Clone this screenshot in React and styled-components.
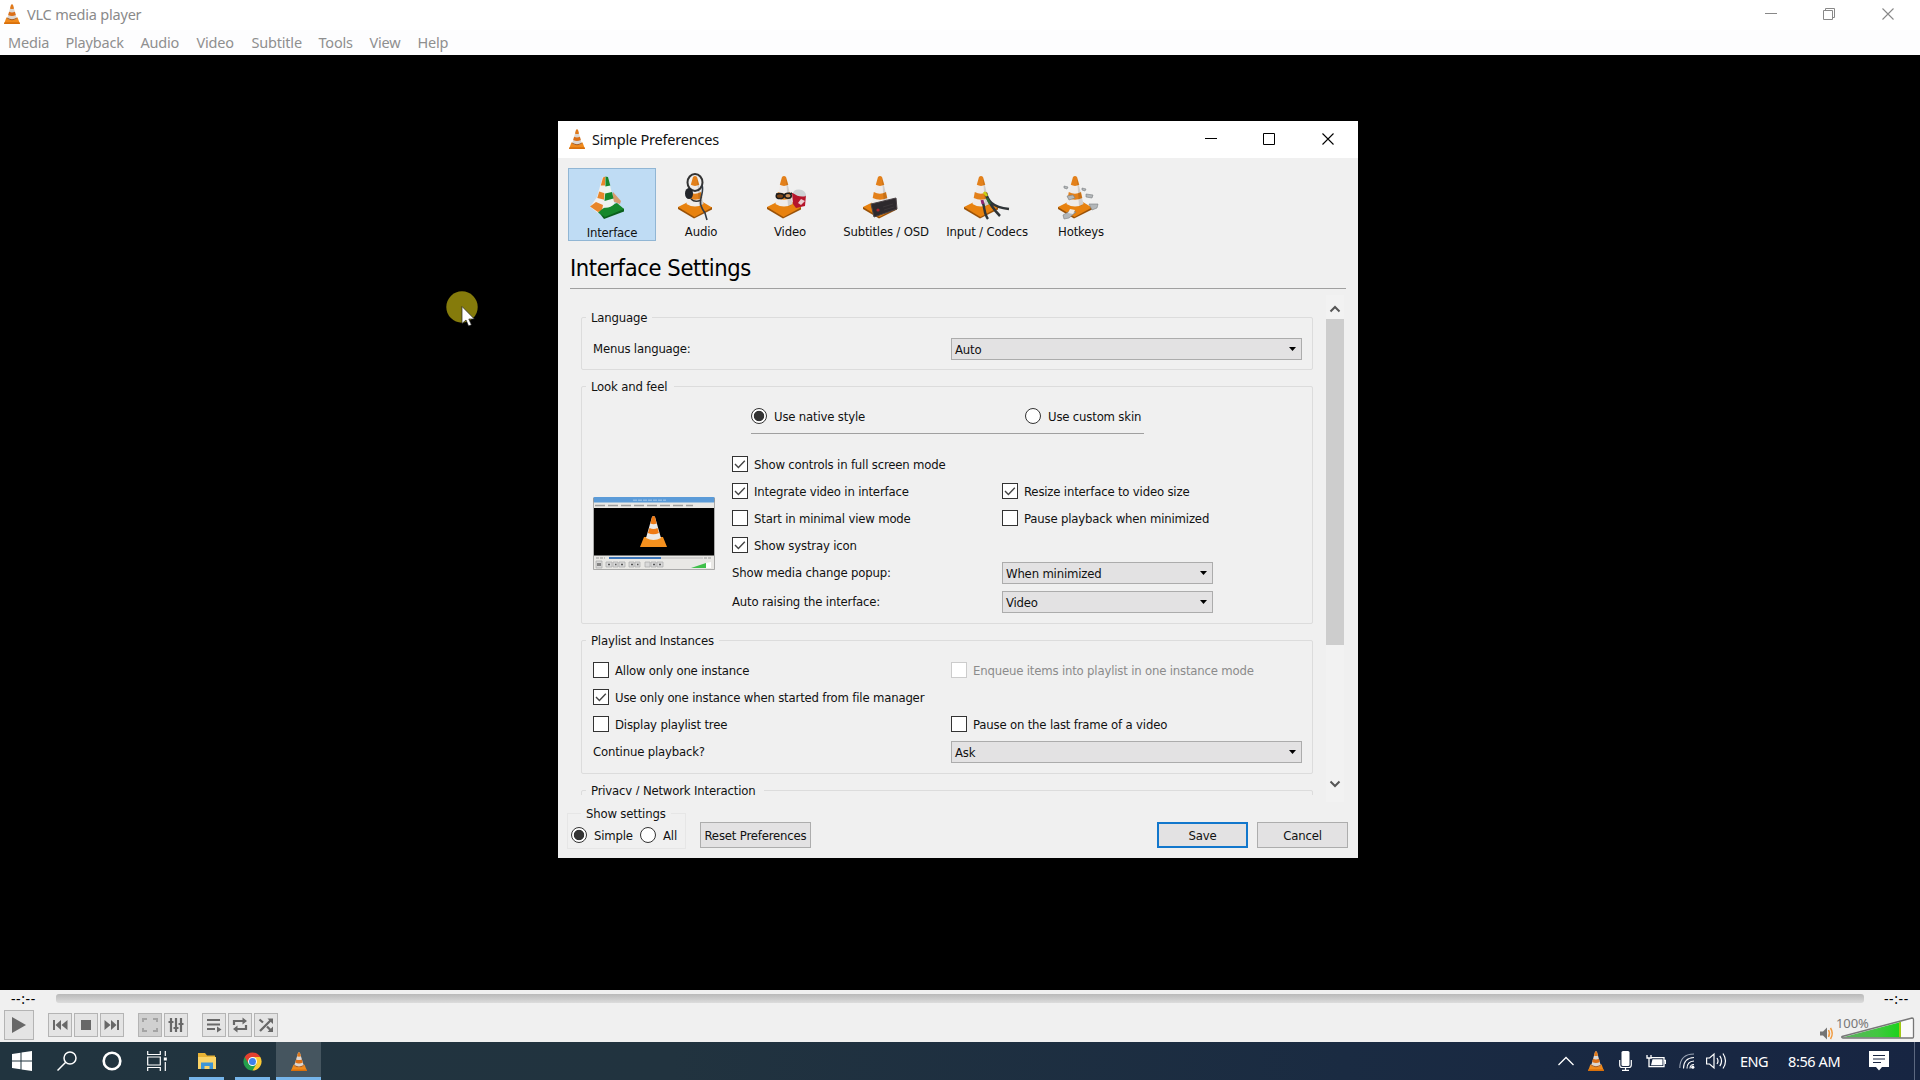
import React from "react";
import styled, { createGlobalStyle, css } from "styled-components";

const UI = `"Segoe UI", "Noto Sans", "Open Sans", sans-serif`;
const DLG = `Tahoma, "DejaVu Sans Condensed", "Noto Sans", sans-serif`;

const Global = createGlobalStyle`
  * { box-sizing: border-box; }
  body { margin: 0; background: #000; overflow: hidden; }
  svg { display: block; flex: none; }
`;

const Screen = styled.div`
  width: 1920px;
  height: 1080px;
  position: relative;
  display: flex;
  flex-direction: column;
  background: #000;
  font-family: ${UI};
  white-space: nowrap;
`;

/* ---------- main window ---------- */
const TitleBar = styled.header`
  height: 30px;
  flex: none;
  background: #fff;
  display: flex;
  align-items: center;
  padding: 0 26px 2px 4px;
`;
const WindowTitle = styled.span`
  flex: 1;
  margin-left: 7px;
  font-size: 14.5px;
  letter-spacing: -0.2px;
  line-height: 20px;
  color: ${(p) => p.$color};
`;
const WindowButtons = styled.div`
  display: flex;
  gap: 46px;
`;
const MenuBar = styled.nav`
  height: 25px;
  flex: none;
  background: #fdfdfe;
  display: flex;
  padding-left: 8px;
  gap: 16px;
`;
const MenuItem = styled.span`
  width: ${(p) => p.$w}px;
  font-size: 14.5px;
  line-height: 25px;
  letter-spacing: -0.2px;
  color: #8f8f8f;
`;
const Stage = styled.main`
  height: 935px;
  flex: none;
  padding: 66px 0 0 558px;
`;

/* ---------- dialog ---------- */
const Dialog = styled.section`
  width: 800px;
  height: 737px;
  background: #f0f0f0;
  display: flex;
  flex-direction: column;
  font-family: ${DLG};
  font-size: 13px;
  letter-spacing: -0.18px;
  color: #111;
`;
const DialogTitle = styled.div`
  height: 37px;
  flex: none;
  background: #fff;
  display: flex;
  align-items: center;
  padding: 0 24px 1px 11px;
  font-family: ${UI};
`;
const Tabs = styled.div`
  display: flex;
  gap: 1px;
  height: 73px;
  margin: 10px 0 0 10px;
  flex: none;
`;
const Tab = styled.div`
  width: ${(p) => p.$w || 88}px;
  border: 1px solid transparent;
  display: flex;
  flex-direction: column;
  align-items: center;
  padding-top: 4px;
  line-height: 21px;
  ${(p) =>
    p.$active &&
    css`
      background: #bfdcf4;
      border-color: #91b6d4;
      line-height: 23px;
    `}
`;
const Heading = styled.h1`
  margin: 9px 12px 0 12px;
  height: 39px;
  flex: none;
  font-size: 23.5px;
  font-weight: 400;
  line-height: 36px;
  letter-spacing: -0.4px;
  border-bottom: 1px solid #a0a0a0;
  color: #000;
`;
const ScrollArea = styled.div`
  display: flex;
  justify-content: space-between;
  height: 507px;
  flex: none;
  margin: 6px 14px 0 23px;
`;
const Content = styled.div`
  width: 733px;
  height: 500px;
  overflow: hidden;
  padding-top: 12px;
`;
const Group = styled.fieldset`
  margin: 0 0 ${(p) => p.$gap}px;
  border: 1px solid #dcdcdc;
  border-radius: 2px;
  padding: ${(p) => p.$pt || 0}px 0 0;
  width: 732px;
  min-width: 0;
  height: ${(p) => p.$h}px;
`;
const Legend = styled.legend`
  margin-left: 4px;
  padding: 0 ${(p) => p.$pr || 5}px 0 5px;
  height: 20px;
  line-height: 21px;
`;
const Row = styled.div`
  display: flex;
  align-items: center;
  height: ${(p) => p.$h || 27}px;
  padding-left: ${(p) => p.$pl || 0}px;
`;
const Cell = styled.div`
  width: ${(p) => p.$w}px;
  flex: none;
  display: flex;
  align-items: center;
  line-height: 21px;
`;
const Select = styled.div`
  width: ${(p) => p.$w}px;
  height: 22px;
  flex: none;
  border: 1px solid #acacac;
  background: #e3e2e3;
  display: flex;
  align-items: center;
  justify-content: space-between;
  padding: 0 5px 0 3px;
  line-height: 21px;
`;
const Box = styled.span`
  width: 16px;
  height: 16px;
  flex: none;
  margin-right: 6px;
  border: 1px solid ${(p) => (p.$off ? "#ccc" : "#333")};
  background: #fff;
`;
const CheckLabel = styled.label`
  display: flex;
  align-items: center;
  line-height: 21px;
  color: ${(p) => (p.$off ? "#8b8b8b" : "inherit")};
`;
const Caption = styled.span`
  padding-top: 1px;
`;
const Dot = styled.span`
  width: 16px;
  height: 16px;
  flex: none;
  margin-right: 7px;
  border: 1px solid #333;
  border-radius: 50%;
  background: ${(p) => (p.$on ? "radial-gradient(circle, #333 4.8px, #fff 5.6px)" : "#fff")};
`;
const LookBody = styled.div`
  display: flex;
  align-items: flex-start;
  padding: 0 0 0 11px;
`;
const Thumb = styled.div`
  width: 122px;
  height: 73px;
  margin: 47px 17px 0 0;
  flex: none;
`;
const StyleRow = styled.div`
  display: flex;
  width: 393px;
  height: 38px;
  margin: 0 0 16px 169px;
  padding-top: 3px;
  align-items: center;
  border-bottom: 1px solid #a0a0a0;
`;
const Scrollbar = styled.div`
  width: 18px;
  height: 507px;
  display: flex;
  flex-direction: column;
  align-items: center;
  background: #f2f2f2;
  padding-top: 10px;
`;
const ScrollThumb = styled.div`
  width: 18px;
  height: 326px;
  background: #cdcdcd;
  margin: 6px 0 135px;
`;
const Footer = styled.div`
  display: flex;
  flex: 1;
  padding: 1px 10px 0 9px;
`;
const ShowSettings = styled.fieldset`
  margin: 0 14px 0 0;
  padding: 0 0 0 3px;
  width: 119px;
  min-width: 0;
  height: 46px;
  border: 1px solid #e6e6e6;
`;
const FooterLegend = styled(Legend)`
  margin-left: 10px;
`;
const Button = styled.div`
  width: ${(p) => p.$w}px;
  height: 26px;
  margin: 19px 0 0 ${(p) => p.$ml || 0};
  border: ${(p) => (p.$main ? "2px solid #1277cc" : "1px solid #adadad")};
  background: #e3e2e3;
  display: flex;
  align-items: center;
  justify-content: center;
`;

/* ---------- player controls ---------- */
const Controls = styled.footer`
  height: 52px;
  flex: none;
  background: #f0f0f0;
`;
const SeekRow = styled.div`
  display: flex;
  align-items: center;
  justify-content: space-between;
  height: 18px;
  padding: 0 11px;
  font-size: 14px;
  color: #000;
`;
const Time = styled.span`
  width: 25px;
  line-height: 16px;
  letter-spacing: 0.6px;
`;
const Groove = styled.div`
  width: 1808px;
  height: 9px;
  margin-bottom: 2px;
  border-radius: 3px;
  background: linear-gradient(#b9b9b9, #dcdcdc);
`;
const ControlRow = styled.div`
  display: flex;
  align-items: center;
  height: 34px;
  padding: 0 5px 0 4px;
`;
const ControlButton = styled.div`
  width: ${(p) => p.$s || 24}px;
  height: ${(p) => p.$s || 24}px;
  margin-left: ${(p) => p.$ml || 0}px;
  border: 1px solid #b4b4b4;
  background: ${(p) => (p.$off ? "#d0d0d0" : "#e4e4e4")};
  display: flex;
  align-items: center;
  justify-content: center;
`;
const Volume = styled.div`
  margin: 5px 0 0 auto;
`;
const VolumeText = styled.span`
  position: absolute;
  left: 1836px;
  top: 1015px;
  font: 13px/16px ${UI};
  letter-spacing: -0.1px;
  color: #777;
`;

/* ---------- taskbar ---------- */
const Taskbar = styled.div`
  height: 38px;
  flex: none;
  display: flex;
  background: linear-gradient(90deg, #21343f 0%, #21333f 35%, #1a2b42 70%, #172542 100%);
  color: #fff;
`;
const TaskItem = styled.div`
  width: ${(p) => p.$w}px;
  margin-right: ${(p) => p.$mr || 0}px;
  display: flex;
  align-items: center;
  justify-content: center;
  background: ${(p) => (p.$active ? "#45555f" : "transparent")};
  border-bottom: 3px solid ${(p) => (p.$run ? "#76b5ea" : "transparent")};
  padding-top: 3px;
`;
const Tray = styled.div`
  margin-left: auto;
  display: flex;
  align-items: center;
  padding-right: 5px;
`;
const TrayItem = styled.div`
  width: ${(p) => p.$w}px;
  margin-right: ${(p) => p.$mr}px;
  font-size: 14.5px;
  letter-spacing: ${(p) => p.$track || 0}px;
  line-height: 38px;
  flex: none;
`;
const PeekLine = styled.div`
  width: 1px;
  height: 38px;
  background: #5c6880;
`;
const Pointer = styled.div`
  position: absolute;
  left: 446px;
  top: 291px;
`;

/* ---------- drawings ---------- */
function Cone({ w = 16, h = 20 }) {
  return (
    <svg width={w} height={h} viewBox="0 0 16 20" preserveAspectRatio="none">
      <path d="M2.4 13.5h11.2L16 20H0z" fill="#f08a1c" />
      <path d="M0.5 18.3h15L16 20H0z" fill="#d9700b" />
      <path d="M7 1Q8-.5 9 1L12.8 14.5Q8 17.5 3.2 14.5z" fill="#dcd6d1" />
      <path d="M7 1Q8-.5 9 1L10 4.5Q8 5.5 6 4.5z" fill="#e27a1a" />
      <path d="M5.1 7.8Q8 9.2 10.9 7.8L11.8 11Q8 13 4.2 11z" fill="#dc6f17" />
      <path d="M3.4 13.8Q8 16.5 12.6 13.8L12.8 14.8Q8 17.5 3.2 14.8z" fill="#a85a1c" />
    </svg>
  );
}

function BigCone() {
  return (
    <g>
      <path d="M1 34L1 36L17 45.5L35 36.5V34z" fill="#9a5208" />
      <path d="M1 34L12 28.5H25L35 34.5L17.5 44z" fill="#e8820f" />
      <path d="M16 4Q18 2 20 4L26.5 31Q18 36 9.5 31z" fill="#efebe9" />
      <path d="M16 4Q18 2 20 4L22.3 11.8Q18 14 13.8 11.8z" fill="#e3801a" />
      <path d="M11.800 19Q18 22.500 24 19L25.300 25Q18 28.500 10.700 25z" fill="#e3801a" />
      <path d="M20 4.2L26.5 31Q24.5 33 22 33.5z" fill="#000" opacity=".12" />
    </g>
  );
}

function TabIcon({ kind }) {
  return (
    <svg width="48" height="48" viewBox="0 0 48 48">
      {kind === "interface" && (
        <>
          <path d="M25 19l8 9-1 3-8-3z" fill="#d99a6c" />
          <path d="M2 34L10 40L17 37V5L14.6 4L9 24z" fill="#f3f0ee" />
          <path d="M15 4.500L17.500 3.500V12.500H12.800z" fill="#e8862a" />
          <path d="M11.200 18.500L17.500 20.500V27L9.300 25z" fill="#e8862a" />
          <path d="M2 33.500L8 29L15 32L14 37.500L10 39z" fill="#e8862a" />
          <path d="M11 39.500L16 46L36 38.500V36L28 31z" fill="#0a5f1c" />
          <path d="M10 39.500L17 34L29 30L36 36L17 44z" fill="#16882c" />
          <path d="M17.5 3.500L20 4L26.500 31Q22 35.500 15.500 34.500z" fill="#eef3ee" />
          <path d="M17.5 3.500L20 4L22.300 12.500L17.400 13.500z" fill="#16882c" />
          <path d="M17.200 20.500L24 19L25.500 25.500L16.500 28z" fill="#16882c" />
        </>
      )}
      {kind === "audio" && (
        <>
          <BigCone />
          <ellipse cx="18" cy="9.5" rx="7.5" ry="8.5" fill="none" stroke="#333" strokeWidth="2" />
          <path d="M25 12C27 18 24 22 23.5 28C23 33 25 36 28 40L30 47" fill="none" stroke="#333b45" strokeWidth="1.6" />
          <ellipse cx="12" cy="20.5" rx="4" ry="5.5" fill="#23262b" />
          <path d="M14 26Q18 30 24 27" fill="none" stroke="#333" strokeWidth="1.6" />
        </>
      )}
      {kind === "video" && (
        <>
          <BigCone />
          <path d="M10 21l7 1 7-1 2-1" fill="none" stroke="#222" strokeWidth="1.6" />
          <ellipse cx="14" cy="23" rx="3.8" ry="2.6" fill="#7c4212" stroke="#1c1c1c" strokeWidth="1.5" />
          <ellipse cx="22" cy="22.7" rx="3.3" ry="2.5" fill="#c98d55" stroke="#1c1c1c" strokeWidth="1.5" />
          <path d="M26 20L40 22L39 33L30 35L27 31z" fill="#b5152b" />
          <path d="M27 20Q28 16 33 16.500Q40 17 40 23Q33 25 27 20z" fill="#cdd2d4" />
          <path d="M32 30l3-4 4 2-4 4z" fill="#e9cdd0" />
        </>
      )}
      {kind === "subs" && (
        <>
          <BigCone />
          <path d="M9 31L34 25L35 36L12 44z" fill="#2d292d" stroke="#4c4447" strokeWidth="1" />
          <circle cx="16" cy="37" r="1.6" fill="#a9242c" />
          <path d="M21 34l10-3M22 37l10-3" stroke="#3b3639" strokeWidth="1" />
        </>
      )}
      {kind === "codecs" && (
        <>
          <BigCone />
          <path d="M23 20C25 27 28 34 46 36M23 22C27 32 31 37 37 43M20 30C22 36 21 41 25 46" fill="none" stroke="#2f3437" strokeWidth="2.5" />
          <path d="M21 19l3 4" stroke="#c9cf10" strokeWidth="2.600" />
          <path d="M24 25l3 6" stroke="#2d6a33" strokeWidth="2.200" />
          <path d="M19 27l1 4" stroke="#8e2570" strokeWidth="3" />
        </>
      )}
      {kind === "hotkeys" && (
        <>
          <BigCone />
          <g fill="#b3b7ba" stroke="#7a7d80" strokeWidth=".6">
            <path d="M7 13l4 1-1 2-3-1zM25 15l4 1-1 2-3-1zM29 21l7 1-1 3-6-1zM10 23l6-1 2 3-6 2zM32 31l9 0-1 4-5 2zM6 42l7-4 6 1-7 6-5 1z" />
          </g>
          <path d="M13 36l5 1-2 4-5-1z" fill="#ece9e6" />
        </>
      )}
    </svg>
  );
}

function PlayerThumb() {
  return (
    <svg width="122" height="73" viewBox="0 0 122 73">
      <rect width="122" height="73" rx="1.5" fill="#e9e8e5" />
      <rect width="122" height="5.5" rx="1.5" fill="#5b9bd8" />
      <path d="M40 3.2h33" stroke="#8dbbe5" strokeWidth="1.6" strokeDasharray="4 1" />
      <path d="M2 8.5h98" stroke="#9d9d9d" strokeWidth="1.6" strokeDasharray="10 3" />
      <rect x="1" y="11" width="120" height="47.5" fill="#000" />
      <path d="M51 40h19l4 10H47z" fill="#f4901e" />
      <path d="M59 20q1.500-2 3 0l6 21q-7.500 4-15 0z" fill="#ece9e6" />
      <path d="M59 20q1.500-2 3 0l1.600 6.500q-3 1.500-6.200 0z" fill="#ef7a14" />
      <path d="M56.500 31q4 2 8 0l1.400 5q-5.500 2.600-11 0z" fill="#ef7a14" />
      <path d="M16 61h52" stroke="#3d76b9" strokeWidth="2" />
      <path d="M68 61h42" stroke="#c9c9c9" strokeWidth="1.600" />
      <path d="M3 61h9M111 61h8" stroke="#999" strokeWidth="1" strokeDasharray="3 1" />
      <g fill="#d9d9d9" stroke="#aaa" strokeWidth=".7">
        <path d="M3 64h6v7H3zM13 65h6v5h-6zM20 65h5v5h-5zM26 65h6v5h-6zM36 65h5v5h-5zM42 65h5v5h-5zM52 65h5v5h-5zM58 65h5v5h-5zM64 65h6v5h-6z" />
      </g>
      <path d="M5 66v3M7 66v3M15 67.500h2M22 67.500h1.500M28 67.500h2M38 67.500h2M44 67.500h1.500M60 67.500h2M66 67.500h2" stroke="#555" strokeWidth="1.300" />
      <path d="M98 71l15-5v5z" fill="#3fc04a" />
      <path d="M113 66l5-1v6h-5z" fill="#fff" />
      <path d="M.5 1v71.500h121V1" fill="none" stroke="#999" strokeWidth=".8" />
    </svg>
  );
}

const Minimize = ({ c }) => (
  <svg width="13" height="12" stroke={c}><path d="M1 5.500h12" /></svg>
);
const CloseX = ({ c }) => (
  <svg width="12" height="12" stroke={c} fill="none"><path d="M.5.5l11 11M11.500.5l-11 11" strokeWidth="1.100" /></svg>
);
const DownTriangle = () => (
  <svg width="7" height="4"><path d="M0 0h7L3.500 4z" fill="#000" /></svg>
);
const Tick = () => (
  <svg width="14" height="14" fill="none" stroke="#444" strokeWidth="1.400"><path d="M2 7l3.400 3.400 6.400-6.600" /></svg>
);
const ScrollChevron = ({ down }) => (
  <svg width="12" height="8" fill="none" stroke="#555" strokeWidth="2">
    <path d={down ? "M1.500 1.500L6 6l4.500-4.500" : "M1.500 6.500L6 2l4.500 4.500"} />
  </svg>
);

function Check({ on, off, children }) {
  return (
    <CheckLabel $off={off}>
      <Box $off={off}>{on && <Tick />}</Box>
      <Caption>{children}</Caption>
    </CheckLabel>
  );
}
function Combo({ w, children }) {
  return (
    <Select $w={w}>
      <Caption>{children}</Caption>
      <DownTriangle />
    </Select>
  );
}
function Radio({ on, children }) {
  return (
    <CheckLabel>
      <Dot $on={on} />
      <Caption>{children}</Caption>
    </CheckLabel>
  );
}

const menus = [["Media", 41.5], ["Playback", 59], ["Audio", 40], ["Video", 39], ["Subtitle", 51], ["Tools", 35], ["View", 32], ["Help", 32]];
const tabs = [
  ["Interface", "interface", 88],
  ["Audio", "audio", 88],
  ["Video", "video", 88],
  ["Subtitles / OSD", "subs", 102],
  ["Input / Codecs", "codecs", 98],
  ["Hotkeys", "hotkeys", 88],
];
const G = "#686868";
const playerButtons = [
  { ml: 14, art: <path d="M1 3h2v10H1zM9 3v10L3.500 8zM15.500 3v10L9.500 8z" fill={G} /> },
  { ml: 2, art: <path d="M3 3h10v10H3z" fill={G} /> },
  { ml: 2, art: <path d="M13 3h2v10h-2zM7 3v10l5.500-5zM.5 3v10l6-5z" fill={G} /> },
  { ml: 14, off: true, art: <path d="M1 5V2h4M11 2h4v3M15 11v3h-4M5 14H1v-3" stroke="#a4a4a4" strokeWidth="2" fill="none" /> },
  { ml: 2, art: <path d="M3 1v14M8 1v14M13 1v14M.5 5h5M5.500 11h5M10.500 7h5" stroke={G} strokeWidth="2.200" fill="none" /> },
  { ml: 14, art: <><path d="M1 3h13M1 7.500h13M1 12h8" stroke={G} strokeWidth="2.200" /><path d="M11 9.500l4.500 3-4.500 3z" fill={G} /></> },
  { ml: 2, art: <><path d="M2 8V4h9M14 8v4H5" stroke={G} strokeWidth="2.200" fill="none" /><path d="M10.500 0.500L15 4l-4.500 3.500zM5.500 8.500L1 12l4.500 3.500z" fill={G} /></> },
  { ml: 2, art: <><path d="M1.500 2.500l3.500 3M2 14L12.500 3.500M9 9.500l4 4" stroke={G} strokeWidth="2.300" fill="none" /><path d="M9.500 1.500H15V7zM9.500 15H15V9.500z" fill={G} /></> },
];

export default function App() {
  return (
    <Screen>
      <Global />
      <TitleBar>
        <Cone />
        <WindowTitle $color="#8a8a8a">VLC media player</WindowTitle>
        <WindowButtons>
          <Minimize c="#888" />
          <svg width="13" height="12" fill="none" stroke="#888"><path d="M.5 2.500h9v9h-9zM2.500 2.500v-2h9v9h-2" /></svg>
          <CloseX c="#888" />
        </WindowButtons>
      </TitleBar>
      <MenuBar>
        {menus.map(([m, w]) => (
          <MenuItem key={m} $w={w}>{m}</MenuItem>
        ))}
      </MenuBar>

      <Stage>
        <Dialog>
          <DialogTitle>
            <Cone />
            <WindowTitle $color="#111">Simple Preferences</WindowTitle>
            <WindowButtons>
              <Minimize c="#000" />
              <svg width="13" height="12" fill="none" stroke="#000"><path d="M.5.5h11v11H.5z" /></svg>
              <CloseX c="#000" />
            </WindowButtons>
          </DialogTitle>
          <Tabs>
            {tabs.map(([name, kind, w], i) => (
              <Tab key={kind} $w={w} $active={i === 0}>
                <TabIcon kind={kind} />
                {name}
              </Tab>
            ))}
          </Tabs>
          <Heading>Interface Settings</Heading>
          <ScrollArea>
            <Content>
              <Group $h={63} $gap={6}>
                <Legend>Language</Legend>
                <Row $h={43} $pl={11}>
                  <Cell $w={358}>Menus language:</Cell>
                  <Combo w={351}>Auto</Combo>
                </Row>
              </Group>
              <Group $h={248} $gap={6}>
                <Legend $pr={7}>Look and feel</Legend>
                <StyleRow>
                  <Cell $w={274}><Radio on>Use native style</Radio></Cell>
                  <Radio>Use custom skin</Radio>
                </StyleRow>
                <LookBody>
                  <Thumb><PlayerThumb /></Thumb>
                  <div>
                    <Row><Check on>Show controls in full screen mode</Check></Row>
                    <Row>
                      <Cell $w={270}><Check on>Integrate video in interface</Check></Cell>
                      <Check on>Resize interface to video size</Check>
                    </Row>
                    <Row>
                      <Cell $w={270}><Check>Start in minimal view mode</Check></Cell>
                      <Check>Pause playback when minimized</Check>
                    </Row>
                    <Row><Check on>Show systray icon</Check></Row>
                    <Row $h={29}>
                      <Cell $w={270}>Show media change popup:</Cell>
                      <Combo w={211}>When minimized</Combo>
                    </Row>
                    <Row $h={29}>
                      <Cell $w={270}>Auto raising the interface:</Cell>
                      <Combo w={211}>Video</Combo>
                    </Row>
                  </div>
                </LookBody>
              </Group>
              <Group $h={144} $gap={6} $pt={6}>
                <Legend>Playlist and Instances</Legend>
                <Row $pl={11}>
                  <Cell $w={358}><Check>Allow only one instance</Check></Cell>
                  <Check off>Enqueue items into playlist in one instance mode</Check>
                </Row>
                <Row $pl={11}><Check on>Use only one instance when started from file manager</Check></Row>
                <Row $pl={11}>
                  <Cell $w={358}><Check>Display playlist tree</Check></Cell>
                  <Check>Pause on the last frame of a video</Check>
                </Row>
                <Row $h={29} $pl={11}>
                  <Cell $w={358}>Continue playback?</Cell>
                  <Combo w={351}>Ask</Combo>
                </Row>
              </Group>
              <Group $h={60} $gap={0}>
                <Legend $pr={9}>Privacy / Network Interaction</Legend>
              </Group>
            </Content>
            <Scrollbar>
              <ScrollChevron />
              <ScrollThumb />
              <ScrollChevron down />
            </Scrollbar>
          </ScrollArea>
          <Footer>
            <ShowSettings>
              <FooterLegend>Show settings</FooterLegend>
              <Row $h={24}>
                <Cell $w={69}><Radio on>Simple</Radio></Cell>
                <Radio>All</Radio>
              </Row>
            </ShowSettings>
            <Button $w={111}>Reset Preferences</Button>
            <Button $w={91} $ml="auto" $main>Save</Button>
            <Button $w={91} $ml="9px">Cancel</Button>
          </Footer>
        </Dialog>
      </Stage>

      <Controls>
        <SeekRow>
          <Time>--:--</Time>
          <Groove />
          <Time>--:--</Time>
        </SeekRow>
        <ControlRow>
          <ControlButton $s={30}>
            <svg width="16" height="18"><path d="M1 1l14 8-14 8z" fill={G} /></svg>
          </ControlButton>
          {playerButtons.map((b, i) => (
            <ControlButton key={i} $ml={b.ml} $off={b.off}>
              <svg width="16" height="16" viewBox="0 0 16 16">{b.art}</svg>
            </ControlButton>
          ))}
          <Volume>
            <svg width="95" height="24" viewBox="0 0 95 24">
              <defs>
                <linearGradient id="vol">
                  <stop offset="0" stopColor="#5fae62" />
                  <stop offset=".6" stopColor="#42c840" />
                  <stop offset="1" stopColor="#19d41a" />
                </linearGradient>
              </defs>
              <path d="M0 15.500h3l4-4v12l-4-4H0z" fill="#747474" />
              <path d="M8.500 14q2 3.500 0 7M10.500 12q3.500 5.500 0 11" fill="none" stroke="#f09a3e" strokeWidth="1.500" />
              <path d="M22 21.500L81 6V21.500z" fill="url(#vol)" />
              <path d="M79 6.500l2-.5v15.500h-2z" fill="#a2c814" />
              <path d="M81 6l12-3.500V21.500H81z" fill="#fafafa" />
              <path d="M22 20.500L92 2q1.500 0 1.500 1.500V21q0 1-1 1H23q-2-.5-1-1.500z" fill="none" stroke="#777" strokeWidth="1.300" />
            </svg>
          </Volume>
        </ControlRow>
      </Controls>
      <VolumeText>100%</VolumeText>

      <Taskbar>
        <TaskItem $w={44}>
          <svg width="20" height="20" fill="#fff"><path d="M0 3l8.500-1.200V9.500H0zM9.500 1.600L20 0v9.500H9.500zM0 10.500h8.500v7.700L0 17zM9.500 10.500H20V20L9.500 18.400z" /></svg>
        </TaskItem>
        <TaskItem $w={46}>
          <svg width="20" height="20" fill="none" stroke="#fff" strokeWidth="1.500"><circle cx="13" cy="7" r="6" /><path d="M8.700 11.300L.5 19.500" /></svg>
        </TaskItem>
        <TaskItem $w={44}>
          <svg width="20" height="20" fill="none" stroke="#fff" strokeWidth="2.600"><circle cx="10" cy="10" r="8.300" /></svg>
        </TaskItem>
        <TaskItem $w={46} $mr={9}>
          <svg width="20" height="20" fill="none" stroke="#fff" strokeWidth="1.200"><path d="M.7 0v3.500h12.600V0M.7 6h12.600v8H.7zM.7 20v-3.500h12.600V20M18.300 0v5M18.300 11v9" /><path d="M16.800 6.500h3v3h-3z" fill="#fff" stroke="none" /></svg>
        </TaskItem>
        <TaskItem $w={35} $mr={11} $run>
          <svg width="20" height="18"><path d="M1 1h7l2 2.500h8V14H1z" fill="#e9b335" /><path d="M1 5h18v12H1z" fill="#fbd366" /><path d="M4 17v-6.500h12V17h-3.500v-3h-5v3z" fill="#3d95d6" /></svg>
        </TaskItem>
        <TaskItem $w={35} $mr={6} $run>
          <svg width="19" height="19" viewBox="-10 -10 20 20">
            <path d="M0 0L-8.230 -4.750A9.500 9.500 0 0 1 8.230 -4.750z" fill="#e2402f" />
            <path d="M0 0L8.230 -4.750A9.500 9.500 0 0 1 0 9.500z" fill="#fcc934" />
            <path d="M0 0L0 9.500A9.500 9.500 0 0 1 -8.230 -4.750z" fill="#24a04c" />
            <path d="M0 -4.750H8.230L4 2.400z" fill="#fcc934" />
            <path d="M-8.230 -4.750L0 -4.750V0L-4 2.400z" fill="#e2402f" />
            <path d="M-4 2.300L0 9.500 4.300 2.300z" fill="#24a04c" />
            <circle r="4.700" fill="#fff" />
            <circle r="3.700" fill="#3f80ec" />
          </svg>
        </TaskItem>
        <TaskItem $w={45} $active $run><Cone h={19} /></TaskItem>
        <Tray>
          <TrayItem $w={16} $mr={14}><svg width="16" height="38" fill="none" stroke="#fff" strokeWidth="1.300"><path d="M.5 23L8 15.500l7.500 7.500" /></svg></TrayItem>
          <TrayItem $w={16} $mr={15}><Cone /></TrayItem>
          <TrayItem $w={13} $mr={14}>
            <svg width="13" height="20" fill="#fff"><rect x="2.500" width="8" height="15" rx="1.500" /><path d="M.7 9v5q0 2.500 2.500 2.500h6.600q2.500 0 2.500-2.500V9M6.500 16.500v3M3 19.400h7" fill="none" stroke="#fff" strokeWidth="1.200" /></svg>
          </TrayItem>
          <TrayItem $w={20} $mr={13}>
            <svg width="20" height="15" fill="none" stroke="#fff" strokeWidth="1.300"><path d="M5 3.700h13v9H3V9M18.500 6.500h1v3.500" /><path d="M6.500 5.200H16.500v6H5z" fill="#fff" stroke="none" /><path d="M1 1v3h4V1M3 4v5" /></svg>
          </TrayItem>
          <TrayItem $w={16} $mr={11}>
            <svg width="16" height="16" fill="none" stroke="#fff" strokeWidth="1.100"><path d="M.8 15Q1 1 15 1" stroke="#9ba5b5" /><path d="M4.500 15.500Q4.500 5 15 4.500M8 15.500Q8 8.500 15 8" /><path d="M11 15.500q0-4 4-4" /><circle cx="13.800" cy="14.200" r="1.600" fill="#fff" stroke="none" /></svg>
          </TrayItem>
          <TrayItem $w={21} $mr={13}>
            <svg width="21" height="18" fill="none" stroke="#fff" strokeWidth="1.200"><path d="M.6 6h3L8 2v14l-4.400-4h-3z" /><path d="M11 6q2 3 0 6M13.800 3.800q3.500 5.200 0 10.400M17 1.500q5 7.500 0 15" /></svg>
          </TrayItem>
          <TrayItem $w={28} $mr={20} $track={-0.6}>ENG</TrayItem>
          <TrayItem $w={54} $mr={27} $track={-0.4}>8:56 AM</TrayItem>
          <TrayItem $w={20} $mr={25}>
            <svg width="20" height="20"><path d="M0 0h20v16h-7l-3 3.500L7 16H0z" fill="#fff" /><path d="M4 4.500h12M4 8h12M4 11.500h8" stroke="#1a2744" strokeWidth="1.200" /></svg>
          </TrayItem>
          <PeekLine />
        </Tray>
      </Taskbar>

      <Pointer>
        <svg width="34" height="50">
          <circle cx="16" cy="16" r="15.700" fill="#857b0b" />
          <path d="M16 15.500v17l4-3.500 2.600 6 2.800-1.200-2.600-5.800h5.500z" fill="#fff" stroke="#222" strokeWidth=".7" />
        </svg>
      </Pointer>
    </Screen>
  );
}
